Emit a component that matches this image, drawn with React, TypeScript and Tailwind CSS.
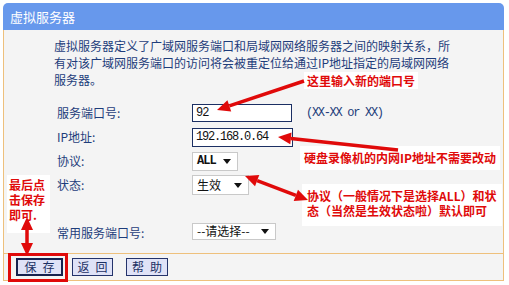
import React from 'react';

const RED = '#e00a0a';

function head(x1: number, y1: number, x2: number, y2: number, len = 13, half = 6) {
  const dx = x2 - x1;
  const dy = y2 - y1;
  const d = Math.hypot(dx, dy);
  const ux = dx / d;
  const uy = dy / d;
  const bx = x2 - ux * len;
  const by = y2 - uy * len;
  const pts = [
    [x2, y2],
    [bx - uy * half, by + ux * half],
    [bx + uy * half, by - ux * half],
  ];
  return { points: pts.map((p) => p.join(',')).join(' '), bx, by };
}

function Arrow({ x1, y1, x2, y2, both = false }: { x1: number; y1: number; x2: number; y2: number; both?: boolean }) {
  const end = head(x1, y1, x2, y2);
  const start = both ? head(x2, y2, x1, y1) : null;
  return (
    <g>
      <line
        x1={start ? start.bx : x1}
        y1={start ? start.by : y1}
        x2={end.bx}
        y2={end.by}
        stroke={RED}
        strokeWidth={3.5}
      />
      <polygon points={end.points} fill={RED} />
      {start && <polygon points={start.points} fill={RED} />}
    </g>
  );
}

function Caret() {
  return (
    <svg width="8" height="5" viewBox="0 0 8 5" className="shrink-0">
      <polygon points="0,0 8,0 4,5" fill="#111" />
    </svg>
  );
}

function Select({ value, w, h, mono = false }: { value: string; w: string; h: string; mono?: boolean }) {
  return (
    <div className={`${w} ${h} flex items-center justify-between bg-white border border-[#c9c9c9] pl-[4px] pr-[6px] text-[12px] text-[#111]`}>
      <span className={mono ? "font-['Liberation_Mono',monospace] tracking-[-1px] font-bold" : ''}>{value}</span>
      <Caret />
    </div>
  );
}

const labels = ['服务端口号:', 'IP地址:', '协议:', '状态:'];

export default function App() {
  return (
    <div className="relative w-[509px] h-[285px] bg-white overflow-hidden font-['Noto_Sans_CJK_SC',sans-serif] text-[#1e3d7b]">
      <div className="ml-[3px] mt-[3px] w-[501px]">
        {/* Title bar */}
        <div className="h-[27px] rounded-t-[5px] bg-[#6798ec] pl-[7px] flex items-center text-[13px] text-white">
          虚拟服务器
        </div>

        {/* Body */}
        <div className="border-x border-b border-[#eec07c] bg-[#f4f4f4] pt-[7px] pb-[10px] pl-[50px]">
          <p className="text-[12px] leading-[17px] whitespace-nowrap">
            虚拟服务器定义了广域网服务端口和局域网网络服务器之间的映射关系，所
            <br />
            有对该广域网服务端口的访问将会被重定位给通过IP地址指定的局域网网络
            <br />
            服务器。
          </p>

          <div className="mt-[13px] ml-[3px] text-[12px]">
            <div className="h-[24px] flex items-center">
              <span className="w-[135px]">{labels[0]}</span>
              <div className="w-[100px] h-[18px] bg-white border border-[#1b2f63] pl-[3px] flex items-center font-['Liberation_Mono',monospace] tracking-[-1px] text-[#111]">
                92
              </div>
              <span className="ml-[14px] font-['Liberation_Mono',monospace] tracking-[-1.3px]">(XX-XX or XX)</span>
            </div>
            <div className="h-[24px] flex items-center">
              <span className="w-[135px]">{labels[1]}</span>
              <div className="w-[101px] h-[19px] bg-white border border-[#1b2f63] pl-[3px] flex items-center font-['Liberation_Mono',monospace] tracking-[-1.2px] text-[#111]">
                192.168.0.64
              </div>
            </div>
            <div className="h-[24px] flex items-center">
              <span className="w-[135px]">{labels[2]}</span>
              <Select value="ALL" w="w-[46px]" h="h-[19px]" mono />
            </div>
            <div className="h-[24px] flex items-center">
              <span className="w-[135px]">{labels[3]}</span>
              <Select value="生效" w="w-[57px]" h="h-[20px]" />
            </div>
            <div className="mt-[22px] h-[24px] flex items-center">
              <span className="w-[135px] pt-[3px]">常用服务端口号:</span>
              <Select value="--请选择--" w="w-[84px]" h="h-[17px]" />
            </div>
          </div>
        </div>

        {/* Footer */}
        <div className="h-[27px] border-x border-b border-[#eec07c] bg-[#f4f4f4] pl-[12px] flex items-center text-[12px] text-[#1b2f63]">
          <button className="w-[47px] h-[18px] border-2 border-[#16224f] bg-[#dfe2f7] flex items-center justify-center gap-[6px]">
            <span>保</span>
            <span>存</span>
          </button>
          <button className="ml-[9px] w-[41px] h-[18px] border border-[#24336b] bg-[#dfe2f7] flex items-center justify-center gap-[6px]">
            <span>返</span>
            <span>回</span>
          </button>
          <button className="ml-[13px] w-[42px] h-[18px] border border-[#24336b] bg-[#dfe2f7] flex items-center justify-center gap-[6px]">
            <span>帮</span>
            <span>助</span>
          </button>
        </div>
      </div>

      {/* Annotations */}
      <div className="absolute left-[304px] top-[72px] h-[17px] px-[3px] bg-white flex items-center text-[12px] font-bold text-[#e00a0a]">
        这里输入新的端口号
      </div>
      <div className="absolute left-[300px] top-[146px] w-[200px] h-[24px] pl-[4px] bg-white flex items-center text-[12px] font-bold text-[#e00a0a]">
        硬盘录像机的内网IP地址不需要改动
      </div>
      <div className="absolute left-[302px] top-[184px] w-[200px] h-[42px] pl-[5px] pt-[4px] bg-white text-[12px] leading-[15px] font-bold text-[#e00a0a] whitespace-nowrap">
        协议（一般情况下是选择ALL）和状
        <br />
        态（当然是生效状态啦）默认即可
      </div>
      <div className="absolute left-[7px] top-[175px] w-[43px] h-[58px] pl-[2px] pt-[2px] bg-white text-[12px] leading-[15px] font-bold text-[#e00a0a]">
        最后点
        <br />
        击保存
        <br />
        即可.
      </div>
      <div className="absolute left-[8px] top-[253px] w-[60px] h-[29px] border-[3px] border-[#e00a0a]" />

      <svg className="absolute inset-0 pointer-events-none" width="509" height="285">
        <Arrow x1={304} y1={81} x2={217} y2={110} />
        <Arrow x1={398} y1={150} x2={278} y2={137} />
        <Arrow x1={245} y1={176} x2={308} y2={200} both />
        <Arrow x1={27} y1={217} x2={27} y2={256} both />
      </svg>
    </div>
  );
}
